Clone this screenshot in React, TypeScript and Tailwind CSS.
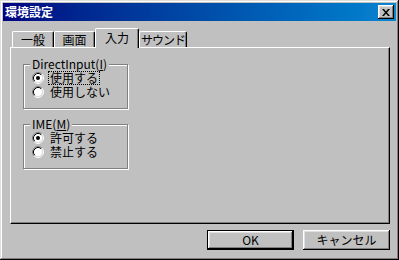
import React from "react";

const raised =
  "shadow-[inset_-1px_-1px_0_#000,inset_1px_1px_0_#fff,inset_-2px_-2px_0_#808080,inset_2px_2px_0_#dfdfdf]";

const Radio = ({ checked }: { checked?: boolean }) => (
  <svg width="12" height="12" viewBox="0 0 12 12" className="shrink-0">
    <circle cx="6" cy="6" r="4.5" fill="#fff" />
    <path d="M2.11 9.89 A5.5 5.5 0 0 1 9.89 2.11" stroke="#808080" fill="none" />
    <path d="M9.89 2.11 A5.5 5.5 0 0 1 2.11 9.89" stroke="#fff" fill="none" />
    <path d="M2.82 9.18 A4.5 4.5 0 0 1 9.18 2.82" stroke="#000" fill="none" />
    <path d="M9.18 2.82 A4.5 4.5 0 0 1 2.82 9.18" stroke="#dfdfdf" fill="none" />
    {checked && <circle cx="6" cy="6" r="2" fill="#000" />}
  </svg>
);

type Opt = { label: string; checked?: boolean; focused?: boolean };

const Group = ({ title, options }: { title: React.ReactNode; options: Opt[] }) => (
  <div className="w-[105px] h-[45px] border border-[#808080] shadow-[inset_1px_1px_0_#fff,1px_1px_0_#fff] flex flex-col">
    <div className="-mt-[8px] ml-[6px] px-[2px] self-start h-[14px] leading-[14px] bg-[#c0c0c0] whitespace-nowrap">
      {title}
    </div>
    {options.map((o) => (
      <div key={o.label} className="flex items-center h-[14px] pl-[8px]">
        <Radio checked={o.checked} />
        <span
          className={
            "ml-[4px] px-[1px] h-[14px] leading-[12px] border border-dotted whitespace-nowrap " +
            (o.focused ? "border-black" : "border-transparent")
          }
        >
          {o.label}
        </span>
      </div>
    ))}
  </div>
);

const tabs = [
  { name: "一般", w: "w-[42px]" },
  { name: "画面", w: "w-[41px]" },
  { name: "入力", w: "w-[44px]", active: true },
  { name: "サウンド", w: "w-[48px] tracking-[-1px]" },
];

export default function App() {
  return (
    <div
      className="w-[399px] h-[260px] bg-[#c0c0c0] p-[3px] flex flex-col text-[12px] text-black shadow-[inset_-1px_-1px_0_#000,inset_1px_1px_0_#dfdfdf,inset_-2px_-2px_0_#808080,inset_2px_2px_0_#fff]"
      style={{ fontFamily: '"Noto Sans CJK JP", "Liberation Sans", sans-serif' }}
    >
      <header className="h-[18px] flex items-center justify-between pl-[2px] pr-[2px] bg-gradient-to-r from-[#000080] to-[#1084d0]">
        <span className="text-white font-bold leading-[18px]">環境設定</span>
        <button className={"w-[16px] h-[14px] bg-[#c0c0c0] flex items-center justify-center " + raised}>
          <svg width="8" height="7" viewBox="0 0 8 7">
            <path d="M0 0h2l2 2.5L6 0h2L5 3.5 8 7H6L4 4.5 2 7H0l3-3.5z" fill="#000" />
          </svg>
        </button>
      </header>

      <div className="ml-[7px] w-[380px] flex flex-col">
        <nav className="mt-[7px] h-[19px] flex items-end pl-[2px]">
          {tabs.map((t) => (
            <div
              key={t.name}
              className={
                t.w +
                " flex items-center justify-center whitespace-nowrap border-t border-l border-white border-r border-r-black rounded-t-[2px] shadow-[inset_-1px_0_0_#808080] bg-[#c0c0c0] " +
                (t.active ? "h-[20px] -mb-[1px] relative z-10 pb-[2px]" : "h-[16px]")
              }
            >
              {t.name}
            </div>
          ))}
        </nav>

        <section className="h-[177px] border-t border-l border-white border-r border-b border-r-black border-b-black shadow-[inset_-1px_-1px_0_#808080] pt-[16px] pl-[12px] flex flex-col">
          <Group
            title={
              <>
                DirectInput(<u>I</u>)
              </>
            }
            options={[
              { label: "使用する", checked: true, focused: true },
              { label: "使用しない" },
            ]}
          />
          <div className="mt-[15px]">
            <Group
              title={
                <>
                  IME(<u>M</u>)
                </>
              }
              options={[{ label: "許可する", checked: true }, { label: "禁止する" }]}
            />
          </div>
        </section>

        <footer className="mt-[6px] flex justify-end gap-[9px]">
          <button className="w-[87px] h-[20px] border border-black">
            <div className={"w-full h-full flex items-center justify-center bg-[#c0c0c0] " + raised}>OK</div>
          </button>
          <button className={"w-[87px] h-[20px] flex items-center justify-center bg-[#c0c0c0] " + raised}>
            キャンセル
          </button>
        </footer>
      </div>
    </div>
  );
}
